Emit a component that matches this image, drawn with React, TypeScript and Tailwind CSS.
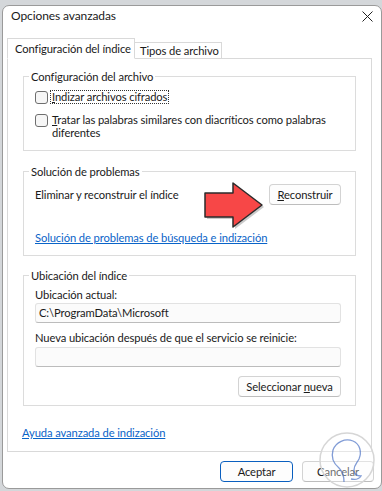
import React from 'react';

const Checkbox = () => (
  <span className="mt-px w-[13px] h-[13px] shrink-0 rounded-[3px] border border-[#6e6e6e] bg-[#f6f6f6]" />
);

const Button = ({ children, className = '' }: { children: React.ReactNode; className?: string }) => (
  <button
    className={`h-[21px] rounded-[4px] border border-[#d3d3d3] border-b-[#bdbdbd] bg-[#fdfdfd] text-[#1a1a1a] leading-[19px] whitespace-nowrap ${className}`}
  >
    {children}
  </button>
);

export default function App() {
  return (
    <div className="w-[382px] h-[491px] bg-[#d4d7da] pt-[5px] pl-[2px] font-['Segoe_UI','Lato',sans-serif] text-[11.2px] tracking-[-0.1px] text-[#1a1a1a] overflow-hidden">
      <div className="relative w-[380px] h-[484px] bg-white border border-[#9a9a9a] rounded-[7px] flex flex-col">
        {/* title bar */}
        <div className="h-[20px] flex items-center justify-between pl-[8px] pr-[8px]">
          <span className="leading-[16px] text-[12px]">Opciones avanzadas</span>
          <svg width="11" height="11" viewBox="0 0 11 11" className="text-[#222]">
            <path d="M0.5 0.5 L10.5 10.5 M10.5 0.5 L0.5 10.5" stroke="currentColor" strokeWidth="1" />
          </svg>
        </div>

        {/* tabs */}
        <div className="mt-[12px] ml-[4px] -mb-px flex items-end relative z-10 h-[21px] whitespace-nowrap">
          <div className="h-[21px] w-[128px] border border-[#d9d9d9] border-b-white bg-white pl-[7px] pt-[2px] leading-[16px]">
            Configuración del índice
          </div>
          <div className="h-[17px] w-[87px] border border-l-0 border-[#d9d9d9] bg-white pl-[5px] leading-[15px]">
            Tipos de archivo
          </div>
        </div>

        {/* tab panel */}
        <div className="ml-[4px] w-[365px] h-[394px] border border-[#d9d9d9] bg-white pt-[10px] px-[15px] flex flex-col">
          <fieldset className="h-[82px] border border-[#dcdcdc]">
            <legend className="ml-[5px] px-[2px] leading-[15px]">Configuración del archivo</legend>
            <div className="pl-[11px] pr-[8px]">
              <div className="mt-[6px] h-[14px] flex items-center">
                <Checkbox />
                <span className="ml-[3px] px-px leading-[12px] outline outline-1 outline-dotted outline-[#333]">
                  <span className="underline">I</span>ndizar archivos cifrados
                </span>
              </div>
              <div className="mt-[9px] flex items-start">
                <Checkbox />
                <p className="ml-[4px] leading-[13px]">
                  <span className="underline">T</span>ratar las palabras similares con diacríticos como palabras diferentes
                </p>
              </div>
            </div>
          </fieldset>

          <fieldset className="relative mt-[13px] h-[92px] border border-[#dcdcdc]">
            <legend className="ml-[5px] px-[2px] leading-[15px]">Solución de problemas</legend>
            <div className="mt-[5px] pl-[11px] pr-[14px] h-[21px] flex items-center justify-between">
              <span className="leading-[15px]">Eliminar y reconstruir el índice</span>
              <Button className="w-[72px]">
                <span className="underline">R</span>econstruir
              </Button>
            </div>
            <div className="mt-[25px] pl-[11px]">
              <span className="leading-[15px] text-[#0a64c8] underline">
                Solución de problemas de búsqueda e indización
              </span>
            </div>
            <svg width="62" height="48" viewBox="0 0 62 48" className="absolute left-[180px] top-[2px]">
              <polygon
                points="3,14 31,14 31,4 60,26 31,48 31,38 3,38"
                fill="#8a8a8a"
                opacity="0.45"
              />
              <polygon
                points="1,12 29,12 29,2 58,24 29,46 29,36 1,36"
                fill="#f74747"
                stroke="#2b2b2b"
                strokeWidth="1.5"
                strokeLinejoin="round"
              />
            </svg>
          </fieldset>

          <fieldset className="mt-[12px] h-[138px] border border-[#dcdcdc]">
            <legend className="ml-[5px] px-[2px] leading-[15px]">Ubicación del índice</legend>
            <div className="pl-[11px] pr-[14px] flex flex-col">
              <span className="mt-[4px] leading-[15px]">Ubicación actual:</span>
              <div className="mt-[1px] h-[20px] rounded-[3px] border border-[#e2e2e2] border-b-[#bcbcbc] bg-[#fbfbfb] pl-[3px] leading-[18px]">
                C:\ProgramData\Microsoft
              </div>
              <span className="mt-[7px] leading-[15px]">Nueva ubicación después de que el servicio se reinicie:</span>
              <div className="mt-[2px] h-[20px] rounded-[3px] border border-[#e2e2e2] border-b-[#bcbcbc] bg-[#fbfbfb]" />
              <Button className="mt-[9px] self-end w-[103px]">
                Seleccionar <span className="underline">n</span>ueva
              </Button>
            </div>
          </fieldset>

          <div className="mt-[19px] -ml-px">
            <span className="leading-[15px] text-[#0a64c8] underline">Ayuda avanzada de indización</span>
          </div>
        </div>

        {/* footer */}
        <div className="mt-[9px] pr-[7px] flex justify-end gap-[9px]">
          <button className="h-[21px] w-[73px] rounded-[4px] border border-[#0a5fbf] bg-[#fdfdfd] leading-[19px]">
            Aceptar
          </button>
          <Button className="w-[72px]">Cancelar</Button>
        </div>

        {/* watermark */}
        <svg width="60" height="60" viewBox="0 0 60 60" className="absolute left-[314px] top-[424px] pointer-events-none">
          <circle cx="30" cy="30" r="27" fill="white" fillOpacity="0.35" stroke="#d6d6d6" strokeWidth="1.5" />
          <path
            d="M27 52 C27 46 26 42 22 38 C16 33 14 27 16 20 C19 12 28 8 36 11 C43 14 45 22 42 29 C40 33 37 35 37 40 C37 45 40 46 44 46 C42 49 38 50 34 49"
            fill="none"
            stroke="#4b72c4"
            strokeOpacity="0.7"
            strokeWidth="1.3"
          />
        </svg>
      </div>
    </div>
  );
}
